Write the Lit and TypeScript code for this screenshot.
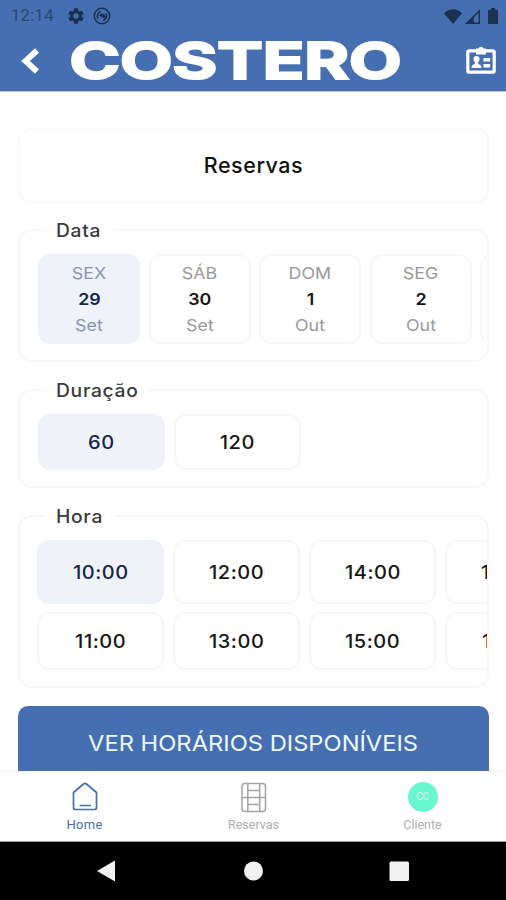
import { LitElement, html, css } from "lit";
import { customElement, property } from "lit/decorators.js";
import { classMap } from "lit/directives/class-map.js";

@customElement("status-bar")
class StatusBar extends LitElement {
  static styles = css`
    :host { display: flex; align-items: center; height: 32px; padding: 0 8px 0 11px; color: #1b3152; }
    .clock { font: 400 16.5px/32px Roboto, sans-serif; letter-spacing: 0.35px; width: 57px; color: #29476f; }
    svg { display: block; fill: currentColor; flex: none; }
    .copy { margin-left: 9px; }
    .wifi { margin-left: auto; }
    .signal { margin-left: 3px; }
    .battery { margin-left: 8px; }
  `;
  render() {
    return html`
      <span class="clock">12:14</span>
      <svg width="16" height="16" viewBox="2 2 20 20"><path fill-rule="evenodd" d="M19.14 12.94a7 7 0 0 0 .06-.94 7 7 0 0 0-.07-.94l2.03-1.58a.5.5 0 0 0 .12-.61l-1.92-3.32a.5.5 0 0 0-.59-.22l-2.39.96a7 7 0 0 0-1.62-.94l-.36-2.54a.5.5 0 0 0-.48-.41h-3.84a.5.5 0 0 0-.47.41l-.36 2.54a7 7 0 0 0-1.62.94l-2.39-.96a.5.5 0 0 0-.59.22L2.74 8.87a.5.5 0 0 0 .12.61l2.03 1.58a7 7 0 0 0 0 1.88l-2.03 1.58a.5.5 0 0 0-.12.61l1.92 3.32c.12.22.37.29.59.22l2.39-.96c.5.38 1.03.7 1.62.94l.36 2.54c.05.24.24.41.48.41h3.84c.24 0 .44-.17.47-.41l.36-2.54a7 7 0 0 0 1.62-.94l2.39.96c.22.08.47 0 .59-.22l1.92-3.32a.5.5 0 0 0-.12-.61zM12 15.4a3.4 3.4 0 1 1 0-6.8 3.4 3.4 0 0 1 0 6.8z"/></svg>
      <svg class="copy" width="18" height="18" viewBox="0 0 18 18"><circle cx="9" cy="9" r="7.7" fill="none" stroke="currentColor" stroke-width="1.5"/><path d="M5.200 11.800A4.600 4.600 0 0 1 8 4.600M12.800 6.200A4.600 4.600 0 0 1 10 13.400" fill="none" stroke="currentColor" stroke-width="1.500"/><path d="M6 8.500A3.500 3.500 0 0 1 12.600 9.600L12.300 12z"/></svg>
      <svg class="wifi" width="18" height="15" viewBox="0 0 18 15"><path d="M0 4.2C5-1.2 13-1.2 18 4.2L9 15z"/></svg>
      <svg class="signal" width="15" height="15" viewBox="0 0 15 15"><path d="M15 0v15H0zM13.600 3.600L8.800 8.400V13.600H13.600z" fill-rule="evenodd"/></svg>
      <svg class="battery" width="10" height="16" viewBox="0 0 10 16"><path d="M3 0h4v1.800h2a1 1 0 0 1 1 1V15a1 1 0 0 1-1 1H1a1 1 0 0 1-1-1V2.800a1 1 0 0 1 1-1h2z"/></svg>
    `;
  }
}

@customElement("app-header")
class AppHeader extends LitElement {
  static styles = css`
    :host { display: flex; align-items: flex-start; height: 59px; padding: 0 10px 0 21px; }
    svg { display: block; flex: none; }
    .back { margin-top: 16px; }
    .logo { margin: 3px 0 0 28px; }
    .logo text { font: 700 51px Inter, sans-serif; fill: #fff; stroke: #fff; stroke-width: 2.2px; stroke-linejoin: miter; }
    .badge { margin: 14px 0 0 auto; }
  `;
  render() {
    return html`
      <svg class="back" width="19" height="26" viewBox="0 0 19 26"><path d="M16 2.500L4.500 13 16 23.500" fill="none" stroke="#fff" stroke-width="5.800"/></svg>
      <svg class="logo" width="336" height="52" viewBox="0 0 336 52"><text x="1.500" y="44.200" textLength="332" lengthAdjust="spacingAndGlyphs">COSTERO</text></svg>
      <svg class="badge" width="30" height="30" viewBox="0 0 30 30">
        <rect x="1.800" y="4.800" width="26.400" height="21.400" rx="1.500" fill="none" stroke="#fff" stroke-width="3.200"/>
        <path d="M10 2.500h2.600a2.500 2.500 0 0 1 4.800 0H20V8.500H10z" fill="#fff"/>
        <circle cx="10.500" cy="13" r="3.100" fill="#fff"/>
        <path d="M5.500 22c0-3 1.800-3.500 3.300-4v-3h3.400v3c1.700.5 3.300 1 3.300 4zM17.500 12.100h6.700v3.500h-6.700zM17.500 17.900h6.700v3.500h-6.700z" fill="#fff"/>
      </svg>
    `;
  }
}

@customElement("field-group")
class FieldGroup extends LitElement {
  @property() label = "";
  static styles = css`
    :host { display: block; box-sizing: border-box; border: 2px solid #f8f8f8; border-radius: 14px; }
    .label { display: block; width: fit-content; height: 24px; margin: -13px 0 0 24px; padding: 0 16px 0 12px; background: #fff; font: 500 18px/25px Inter, sans-serif; letter-spacing: 0.65px; color: #3a3a3a; }
    .label span { display: block; transform: scaleX(1.07); transform-origin: left; }
    .strip { overflow: hidden; }
  `;
  render() {
    return html`<div class="label"><span>${this.label}</span></div><div class="strip"><slot></slot></div>`;
  }
}

const days = [["SEX", "29", "Set"], ["SÁB", "30", "Set"], ["DOM", "1", "Out"], ["SEG", "2", "Out"], ["", "", ""]];
const hours = ["10:00", "12:00", "14:00", "16:00", "11:00", "13:00", "15:00", "17:00"];

@customElement("app-root")
class AppRoot extends LitElement {
  static styles = css`
    :host { display: flex; flex-direction: column; width: 506px; height: 900px; overflow: hidden; background: #fff; font-family: Inter, sans-serif; }
    .top { flex: none; background: #456fb1; height: 91px; border-bottom: 1px solid #b7c7e0; }
    .content { flex: 1; min-height: 0; overflow: hidden; padding: 36px 17px 0 18px; }
    .title { box-sizing: border-box; height: 75px; margin: 0 0 0 0; border: 2px solid #f9f9f9; border-radius: 12px; font: 500 21.500px/71px Inter, sans-serif; letter-spacing: 0.55px; text-align: center; color: #111; }
    .dates { margin-top: 26px; height: 133px; }
    .durations { margin-top: 27px; height: 99px; }
    .hours { margin-top: 27px; height: 173px; }
    .row { display: grid; }
    .dates .row { grid-template-columns: repeat(5, 102px); column-gap: 8.600px; margin: 12px 0 0 18px; }
    .durations .row { grid-template-columns: repeat(2, 127px); column-gap: 9px; margin: 12px 0 0 18px; }
    .hours .row { grid-template-columns: repeat(4, 127px); grid-template-rows: 64px 58px; gap: 8px 9px; margin: 12px 0 0 17px; }
    .cell { box-sizing: border-box; border: 2px solid #f8f8f8; border-radius: 12px; display: flex; align-items: center; justify-content: center; font-weight: 500; font-size: 18.500px; letter-spacing: 0.5px; color: #161616; }
    .cell span { display: block; transform: scaleX(1.08); }
    .day { height: 90px; flex-direction: column; font-size: 16.500px; line-height: 25.700px; padding-top: 2px; }
    .muted { font-weight: 400; color: #999; letter-spacing: 0.1px; }
    .num { font-weight: 600; letter-spacing: 0; }
    .short { height: 56px; }
    .on { background: #eff3f9; border-color: #eff3f9; color: #17234f; }
    .on .muted { color: #8793b1; }
    .cta { height: 75px; margin: 18px 0 0 0; border-radius: 10px; background: #456fb1; color: #f1f7ff; font-size: 22px; line-height: 75px; text-align: center; }
    .cta span { display: inline-block; transform: scaleX(1.078); }
    .tabs { flex: none; height: 71px; display: grid; grid-template-columns: repeat(3, 169px); box-sizing: border-box; border-top: 1px solid #f5f6f8; border-bottom: 1px solid #999; }
    .tab { display: flex; flex-direction: column; align-items: center; padding-top: 10px; font: 400 12.500px/16px Roboto, sans-serif; color: #adadad; }
    .tab svg { display: block; height: 32px; margin-bottom: 3px; }
    .active { color: #456fb1; font-size: 13px; letter-spacing: 0.3px; }
    .avatar { width: 30px; height: 30px; margin: 0 0 5px; border-radius: 50%; background: #69f8ce; color: #c4ffec; font-size: 10px; font-weight: 500; line-height: 30px; text-align: center; letter-spacing: -0.5px; }
    .nav { flex: none; height: 58px; background: #000; }
    .nav svg { display: block; }
  `;

  render() {
    return html`
      <div class="top"><status-bar></status-bar><app-header></app-header></div>
      <div class="content">
        <div class="title">Reservas</div>
        <field-group class="dates" label="Data">
          <div class="row">${days.map(([name, num, month], i) => html`
            <div class=${classMap({ cell: true, day: true, on: i === 0 })}>
              <span class="muted">${name}</span><span class="num">${num}</span><span class="muted">${month}</span>
            </div>`)}</div>
        </field-group>
        <field-group class="durations" label="Duração">
          <div class="row"><div class="cell short on"><span>60</span></div><div class="cell short"><span>120</span></div></div>
        </field-group>
        <field-group class="hours" label="Hora">
          <div class="row">${hours.map((h, i) => html`<div class=${classMap({ cell: true, on: i === 0 })}><span>${h}</span></div>`)}</div>
        </field-group>
        <div class="cta"><span>VER HORÁRIOS DISPONÍVEIS</span></div>
      </div>
      <div class="tabs">
        <div class="tab active">
          <svg width="28" viewBox="0 0 28 32"><path d="M2.500 10.500L12.500 2q1.500-1.100 3 0L25.500 10.500V25.500q0 2-2 2h-19q-2 0-2-2zM8.500 23.500H20" fill="none" stroke="currentColor" stroke-width="1.700"/></svg>
          Home
        </div>
        <div class="tab">
          <svg width="28" viewBox="0 0 28 32" fill="none" stroke="#a3a3a3" stroke-width="1.500"><rect x="2" y="1.500" width="23.500" height="28" rx="3"/><path d="M7.800 1.500v28M19.700 1.500v28M2 15.500h23.500M7.800 8.500h11.900M7.800 22.500h11.900"/></svg>
          Reservas
        </div>
        <div class="tab"><div class="avatar">CC</div>Cliente</div>
      </div>
      <div class="nav">
        <svg width="506" height="58" viewBox="0 0 506 58" fill="#f1f1f1"><path d="M97 29l18-10.500v21z"/><circle cx="253.500" cy="29" r="9.500"/><rect x="389.500" y="19.500" width="19.500" height="19.500" rx="1.500"/></svg>
      </div>
    `;
  }
}
